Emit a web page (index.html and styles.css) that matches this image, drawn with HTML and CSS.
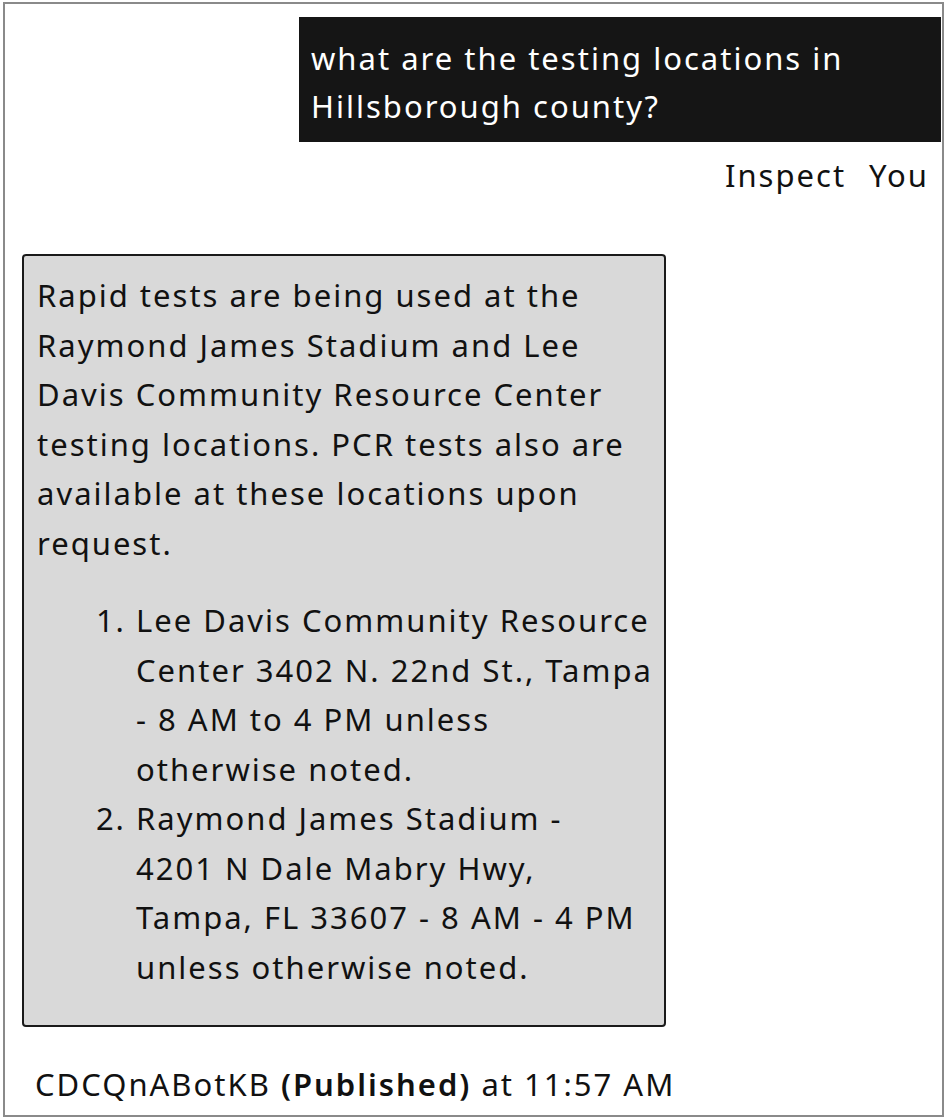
FILE: index.html
```html
<!DOCTYPE html>
<html>
<head>
<meta charset="utf-8">
<link rel="stylesheet" href="styles.css">
</head>
<body>
<div class="frame">
  <div class="user-row">
    <div class="user-bubble">what are the testing locations in Hillsborough county?</div>
  </div>
  <div class="user-meta"><span>Inspect</span><span>You</span></div>
  <div class="bot-bubble">
    <p>Rapid tests are being used at the Raymond James Stadium and Lee Davis Community Resource Center testing locations. PCR tests also are available at these locations upon request.</p>
    <ol>
      <li>Lee Davis Community Resource Center 3402 N. 22nd St., Tampa - 8 AM to 4 PM unless otherwise noted.</li>
      <li>Raymond James Stadium - 4201&nbsp;N Dale Mabry Hwy, Tampa, FL 33607 - 8 AM - 4 PM unless otherwise noted.</li>
    </ol>
  </div>
  <div class="bot-meta">CDCQnABotKB <b>(Published)</b> at 11:57 AM</div>
</div>
</body>
</html>
```
FILE: styles.css
```css
html, body {
  margin: 0;
  padding: 0;
  background: #fff;
}
body {
  font-family: "Noto Sans", "Open Sans", sans-serif;
  font-size: 31px;
  letter-spacing: 2px;
  color: #111;
}
.frame {
  box-sizing: border-box;
  margin: 2px 1px 0 3px;
  height: 1115px;
  border: 2px solid #8a8a8a;
  display: flex;
  flex-direction: column;
}
.user-row {
  display: flex;
  justify-content: flex-end;
  padding: 13px 1px 0 0;
}
.user-bubble {
  box-sizing: border-box;
  width: 642px;
  height: 125px;
  background: #151515;
  color: #fff;
  padding: 17px 8px 17px 12px;
  line-height: 48px;
}
.user-meta {
  display: flex;
  justify-content: flex-end;
  gap: 23px;
  padding: 9px 13px 0 0;
  line-height: 48px;
}
.bot-bubble {
  box-sizing: border-box;
  margin: 55px 0 0 17px;
  width: 644px;
  height: 773px;
  background: #d9d9d9;
  border: 2px solid #1a1a1a;
  border-radius: 4px;
  padding: 15px 6px 15px 13px;
  line-height: 49.5px;
}
.bot-bubble p {
  margin: 0;
}
.bot-bubble ol {
  margin: 28px 0 0;
  padding-left: 99px;
}
.bot-meta {
  padding: 33px 0 0 30px;
  line-height: 48px;
}
.bot-meta b {
  font-weight: 600;
}
```
